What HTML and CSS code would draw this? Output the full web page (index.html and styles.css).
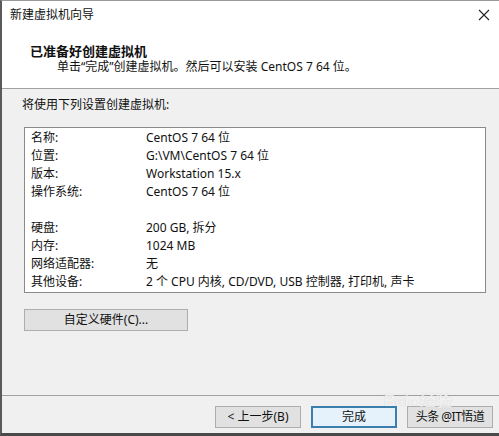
FILE: index.html
```html
<!DOCTYPE html>
<html lang="zh">
<head>
<meta charset="utf-8">
<link rel="stylesheet" href="styles.css">
</head>
<body>
<div class="window">
  <div class="titlebar">
    <span class="title">新建虚拟机向导</span>
    <span class="close">
      <svg width="12" height="12" viewBox="0 0 12 12"><path d="M1 1L11 11M11 1L1 11" stroke="#222" stroke-width="1.1" fill="none"/></svg>
    </span>
  </div>
  <div class="header">
    <div class="h-title">已准备好创建虚拟机</div>
    <div class="h-sub">单击“完成”创建虚拟机。然后可以安装 CentOS 7 64 位。</div>
  </div>
  <div class="content">
    <div class="intro">将使用下列设置创建虚拟机:</div>
    <div class="summary">
      <div class="row"><span class="k">名称:</span><span class="v">CentOS 7 64 位</span></div>
      <div class="row"><span class="k">位置:</span><span class="v">G:\VM\CentOS 7 64 位</span></div>
      <div class="row"><span class="k">版本:</span><span class="v">Workstation 15.x</span></div>
      <div class="row"><span class="k">操作系统:</span><span class="v">CentOS 7 64 位</span></div>
      <div class="row"></div>
      <div class="row"><span class="k">硬盘:</span><span class="v">200 GB, 拆分</span></div>
      <div class="row"><span class="k">内存:</span><span class="v">1024 MB</span></div>
      <div class="row"><span class="k">网络适配器:</span><span class="v">无</span></div>
      <div class="row"><span class="k">其他设备:</span><span class="v">2 个 CPU 内核, CD/DVD, USB 控制器, 打印机, 声卡</span></div>
    </div>
    <div class="custom-row"><button class="btn custom">自定义硬件(C)...</button></div>
  </div>
  <div class="footer">
    <button class="btn nav">&lt; 上一步(B)</button>
    <button class="btn nav primary">完成</button>
    <button class="btn nav cancel">头条 @IT悟道</button>
    <span class="wm">Bai<span class="paw">●</span>经验</span>
  </div>
</div>
</body>
</html>
```
FILE: styles.css
```css
html, body {
  margin: 0;
  padding: 0;
  width: 499px;
  height: 436px;
  overflow: hidden;
  background: #f0f0f0;
}
.window {
  box-sizing: border-box;
  width: 499px;
  height: 436px;
  border-left: 2px solid #5a5a5a;
  border-top: 1px solid #9a9a9a;
  border-bottom: 3px solid #4a4a4a;
  display: flex;
  flex-direction: column;
  font-family: "Noto Sans", "Noto Sans CJK SC", sans-serif;
  font-size: 12px;
  color: #111;
  position: relative;
}
.titlebar {
  height: 30px;
  background: #fff;
  display: flex;
  align-items: center;
  justify-content: space-between;
  padding: 0 9px 0 8px;
}
.title {
  font-size: 12px;
  line-height: 16px;
  margin-top: -2px;
}
.close {
  display: flex;
  margin-top: -3px;
}
.header {
  height: 57px;
  background: #fff;
  border-bottom: 1px solid #a0a0a0;
  padding-left: 28px;
}
.h-title {
  font-size: 13px;
  font-weight: bold;
  line-height: 18px;
  margin-top: 11px;
}
.h-sub {
  font-size: 12px;
  line-height: 16px;
  margin-left: 27px;
  margin-top: -1px;
}
.content {
  flex: 1;
  padding-left: 20px;
}
.intro {
  line-height: 18px;
  margin-top: 7px;
}
.summary {
  width: 460px;
  margin-top: 13px;
  margin-left: 2px;
  background: #fff;
  border: 1px solid #8a8a8a;
  padding: 1px 0;
}
.row {
  height: 18px;
  line-height: 18px;
  display: flex;
}
.k {
  width: 115px;
  padding-left: 6px;
}
.v {
  white-space: nowrap;
}
.custom-row {
  margin-top: 16px;
  margin-left: 2px;
}
.btn {
  font-family: "Noto Sans", "Noto Sans CJK SC", sans-serif;
  font-size: 12px;
  color: #111;
  background: #e1e1e1;
  border: 1px solid #adadad;
  padding: 0;
  height: 22px;
  line-height: 18px;
}
.custom {
  width: 164px;
}
.footer {
  height: 38px;
  border-top: 1px solid #a0a0a0;
  display: flex;
  align-items: flex-start;
  padding: 10px 0 0 213px;
  box-sizing: border-box;
  gap: 10px;
  position: relative;
}
.nav {
  width: 86px;
  height: 22px;
}
.primary {
  border: 2px solid #3c7fae;
  background: #e5f1fb;
}
.cancel {
  letter-spacing: -0.5px;
}
.wm {
  position: absolute;
  left: 382px;
  top: -5px;
  font-family: "Liberation Sans", sans-serif;
  font-size: 16px;
  font-weight: bold;
  color: rgba(255, 255, 255, 0.75);
  text-shadow: 0 0 1px rgba(120,120,120,0.35);
  pointer-events: none;
}
.paw {
  font-size: 12px;
  margin: 0 2px;
}
```
